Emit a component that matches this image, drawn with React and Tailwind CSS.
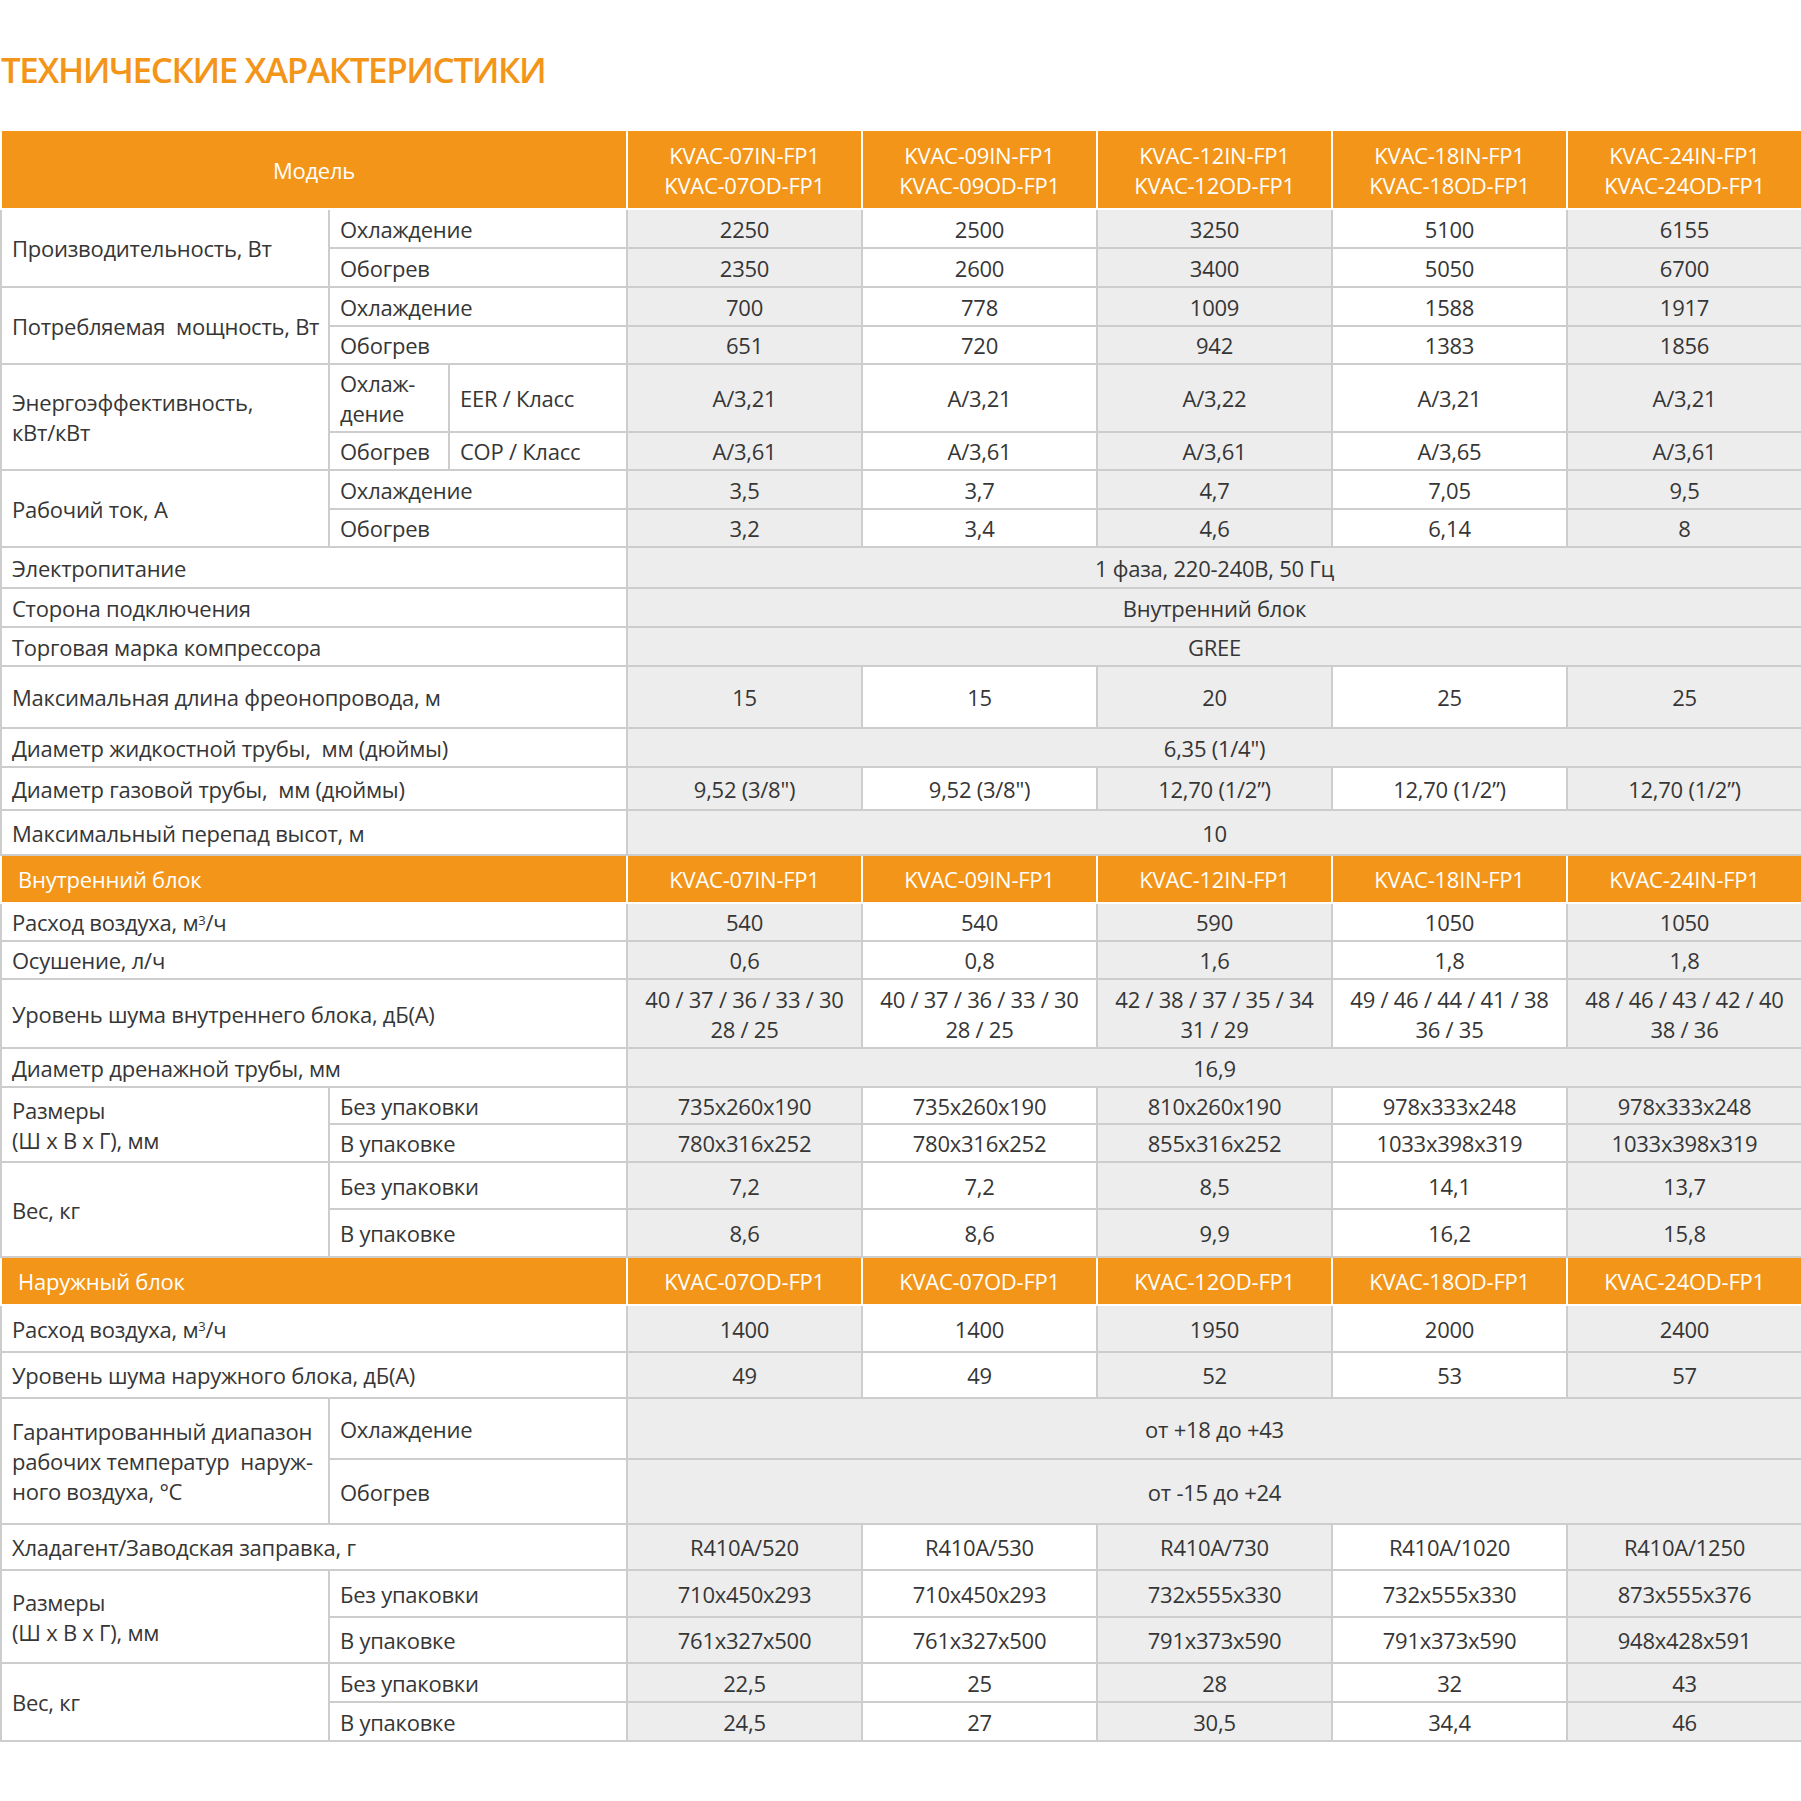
import React from 'react'

const models = [
  ['KVAC-07IN-FP1', 'KVAC-07OD-FP1'],
  ['KVAC-09IN-FP1', 'KVAC-09OD-FP1'],
  ['KVAC-12IN-FP1', 'KVAC-12OD-FP1'],
  ['KVAC-18IN-FP1', 'KVAC-18OD-FP1'],
  ['KVAC-24IN-FP1', 'KVAC-24OD-FP1'],
]

const cell = 'border-2 border-[#cdcdcd] px-[10px] leading-[30px] align-middle'
const orange = 'border-2 border-white bg-[#f39518] text-white leading-[30px] align-middle'

// value cells alternate grey / white by column
function Vals({ items, boxed = [] }) {
  return items.map((v, i) => (
    <td
      key={i}
      className={`${cell} text-center whitespace-nowrap ${i % 2 === 0 ? 'bg-[#ededed]' : 'bg-white'} ${boxed.includes(i) ? 'border-[#b9b9b9]' : ''}`}
    >
      {v}
    </td>
  ))
}

function Span({ children }) {
  return (
    <td colSpan={5} className={`${cell} text-center bg-[#ededed]`}>
      {children}
    </td>
  )
}

function Label({ children, colSpan = 3, rowSpan = 1 }) {
  return (
    <td colSpan={colSpan} rowSpan={rowSpan} className={`${cell} text-left bg-white whitespace-nowrap`}>
      {children}
    </td>
  )
}

function Section({ title, names }) {
  return (
    <tr className="h-[48px]">
      <td colSpan={3} className={`${orange} text-left pl-[16px]`}>{title}</td>
      {names.map((n, i) => (
        <td key={i} className={`${orange} text-center`}>{n}</td>
      ))}
    </tr>
  )
}

export default function App() {
  return (
    <div className="w-[1801px] bg-white text-[#363636] text-[22px] tracking-[-0.25px]" style={{ fontFamily: '"Open Sans", "Noto Sans", sans-serif' }}>
      <h1 className="pt-[52px] mb-[42px] pl-[1px] text-[35px] leading-[35px] font-semibold text-[#f39518] tracking-[-1.4px]">
        ТЕХНИЧЕСКИЕ ХАРАКТЕРИСТИКИ
      </h1>

      <table className="w-[1801px] border-collapse table-fixed">
        <colgroup>
          <col className="w-[328px]" />
          <col className="w-[120px]" />
          <col className="w-[178px]" />
          <col className="w-[235px]" />
          <col className="w-[235px]" />
          <col className="w-[235px]" />
          <col className="w-[235px]" />
          <col className="w-[235px]" />
        </colgroup>
        <tbody>
          <tr className="h-[79px]">
            <td colSpan={3} className={`${orange} text-center`}>Модель</td>
            {models.map((m) => (
              <td key={m[0]} className={`${orange} text-center`}>
                {m[0]}
                <br />
                {m[1]}
              </td>
            ))}
          </tr>

          <tr className="h-[39px]">
            <Label rowSpan={2} colSpan={1}>Производительность, Вт</Label>
            <Label colSpan={2}>Охлаждение</Label>
            <Vals items={['2250', '2500', '3250', '5100', '6155']} />
          </tr>
          <tr className="h-[39px]">
            <Label colSpan={2}>Обогрев</Label>
            <Vals items={['2350', '2600', '3400', '5050', '6700']} />
          </tr>

          <tr className="h-[39px]">
            <Label rowSpan={2} colSpan={1}>Потребляемая&nbsp; мощность, Вт</Label>
            <Label colSpan={2}>Охлаждение</Label>
            <Vals items={['700', '778', '1009', '1588', '1917']} />
          </tr>
          <tr className="h-[38px]">
            <Label colSpan={2}>Обогрев</Label>
            <Vals items={['651', '720', '942', '1383', '1856']} />
          </tr>

          <tr className="h-[68px]">
            <Label rowSpan={2} colSpan={1}>
              Энергоэффективность,
              <br />
              кВт/кВт
            </Label>
            <Label colSpan={1}>
              Охлаж-
              <br />
              дение
            </Label>
            <Label colSpan={1}>EER / Класс</Label>
            <Vals items={['A/3,21', 'A/3,21', 'A/3,22', 'A/3,21', 'A/3,21']} />
          </tr>
          <tr className="h-[38px]">
            <Label colSpan={1}>Обогрев</Label>
            <Label colSpan={1}>COP / Класс</Label>
            <Vals items={['A/3,61', 'A/3,61', 'A/3,61', 'A/3,65', 'A/3,61']} />
          </tr>

          <tr className="h-[39px]">
            <Label rowSpan={2} colSpan={1}>Рабочий ток, А</Label>
            <Label colSpan={2}>Охлаждение</Label>
            <Vals items={['3,5', '3,7', '4,7', '7,05', '9,5']} />
          </tr>
          <tr className="h-[38px]">
            <Label colSpan={2}>Обогрев</Label>
            <Vals items={['3,2', '3,4', '4,6', '6,14', '8']} />
          </tr>

          <tr className="h-[41px]">
            <Label>Электропитание</Label>
            <Span>1 фаза, 220-240В, 50 Гц</Span>
          </tr>
          <tr className="h-[39px]">
            <Label>Сторона подключения</Label>
            <Span>Внутренний блок</Span>
          </tr>
          <tr className="h-[39px]">
            <Label>Торговая марка компрессора</Label>
            <Span>GREE</Span>
          </tr>
          <tr className="h-[62px]">
            <Label>Максимальная длина фреонопровода, м</Label>
            <Vals items={['15', '15', '20', '25', '25']} boxed={[1, 3]} />
          </tr>
          <tr className="h-[39px]">
            <Label>Диаметр жидкостной трубы,&nbsp; мм (дюймы)</Label>
            <Span>6,35 (1/4")</Span>
          </tr>
          <tr className="h-[43px]">
            <Label>Диаметр газовой трубы,&nbsp; мм (дюймы)</Label>
            <Vals items={['9,52 (3/8")', '9,52 (3/8")', '12,70 (1/2”)', '12,70 (1/2”)', '12,70 (1/2”)']} boxed={[3, 4]} />
          </tr>
          <tr className="h-[45px]">
            <Label>Максимальный перепад высот, м</Label>
            <Span>10</Span>
          </tr>

          <Section title="Внутренний блок" names={models.map((m) => m[0])} />

          <tr className="h-[38px]">
            <Label>
              Расход воздуха, м<sup className="text-[13px]">3</sup>/ч
            </Label>
            <Vals items={['540', '540', '590', '1050', '1050']} />
          </tr>
          <tr className="h-[38px]">
            <Label>Осушение, л/ч</Label>
            <Vals items={['0,6', '0,8', '1,6', '1,8', '1,8']} />
          </tr>
          <tr className="h-[69px]">
            <Label>Уровень шума внутреннего блока, дБ(А)</Label>
            <Vals
              items={[
                <>40 / 37 / 36 / 33 / 30<br />28 / 25</>,
                <>40 / 37 / 36 / 33 / 30<br />28 / 25</>,
                <>42 / 38 / 37 / 35 / 34<br />31 / 29</>,
                <>49 / 46 / 44 / 41 / 38<br />36 / 35</>,
                <>48 / 46 / 43 / 42 / 40<br />38 / 36</>,
              ]}
            />
          </tr>
          <tr className="h-[39px]">
            <Label>Диаметр дренажной трубы, мм</Label>
            <Span>16,9</Span>
          </tr>
          <tr className="h-[37px]">
            <Label rowSpan={2} colSpan={1}>
              Размеры
              <br />
              (Ш х В х Г), мм
            </Label>
            <Label colSpan={2}>Без упаковки</Label>
            <Vals items={['735x260x190', '735x260x190', '810x260x190', '978x333x248', '978x333x248']} />
          </tr>
          <tr className="h-[38px]">
            <Label colSpan={2}>В упаковке</Label>
            <Vals items={['780x316x252', '780x316x252', '855x316x252', '1033x398x319', '1033x398x319']} />
          </tr>
          <tr className="h-[47px]">
            <Label rowSpan={2} colSpan={1}>Вес, кг</Label>
            <Label colSpan={2}>Без упаковки</Label>
            <Vals items={['7,2', '7,2', '8,5', '14,1', '13,7']} />
          </tr>
          <tr className="h-[48px]">
            <Label colSpan={2}>В упаковке</Label>
            <Vals items={['8,6', '8,6', '9,9', '16,2', '15,8']} />
          </tr>

          <Section
            title="Наружный блок"
            names={['KVAC-07OD-FP1', 'KVAC-07OD-FP1', 'KVAC-12OD-FP1', 'KVAC-18OD-FP1', 'KVAC-24OD-FP1']}
          />

          <tr className="h-[47px]">
            <Label>
              Расход воздуха, м<sup className="text-[13px]">3</sup>/ч
            </Label>
            <Vals items={['1400', '1400', '1950', '2000', '2400']} />
          </tr>
          <tr className="h-[46px]">
            <Label>Уровень шума наружного блока, дБ(А)</Label>
            <Vals items={['49', '49', '52', '53', '57']} />
          </tr>
          <tr className="h-[61px]">
            <Label rowSpan={2} colSpan={1}>
              Гарантированный диапазон
              <br />
              рабочих температур&nbsp; наруж-
              <br />
              ного воздуха, °С
            </Label>
            <Label colSpan={2}>Охлаждение</Label>
            <Span>от +18 до +43</Span>
          </tr>
          <tr className="h-[65px]">
            <Label colSpan={2}>Обогрев</Label>
            <Span>от -15 до +24</Span>
          </tr>
          <tr className="h-[46px]">
            <Label>Хладагент/Заводская заправка, г</Label>
            <Vals items={['R410A/520', 'R410A/530', 'R410A/730', 'R410A/1020', 'R410A/1250']} />
          </tr>
          <tr className="h-[47px]">
            <Label rowSpan={2} colSpan={1}>
              Размеры
              <br />
              (Ш х В х Г), мм
            </Label>
            <Label colSpan={2}>Без упаковки</Label>
            <Vals items={['710x450x293', '710x450x293', '732x555x330', '732x555x330', '873x555x376']} />
          </tr>
          <tr className="h-[46px]">
            <Label colSpan={2}>В упаковке</Label>
            <Vals items={['761x327x500', '761x327x500', '791x373x590', '791x373x590', '948x428x591']} />
          </tr>
          <tr className="h-[39px]">
            <Label rowSpan={2} colSpan={1}>Вес, кг</Label>
            <Label colSpan={2}>Без упаковки</Label>
            <Vals items={['22,5', '25', '28', '32', '43']} />
          </tr>
          <tr className="h-[39px]">
            <Label colSpan={2}>В упаковке</Label>
            <Vals items={['24,5', '27', '30,5', '34,4', '46']} />
          </tr>
        </tbody>
      </table>
      <div className="h-[60px]" />
    </div>
  )
}
